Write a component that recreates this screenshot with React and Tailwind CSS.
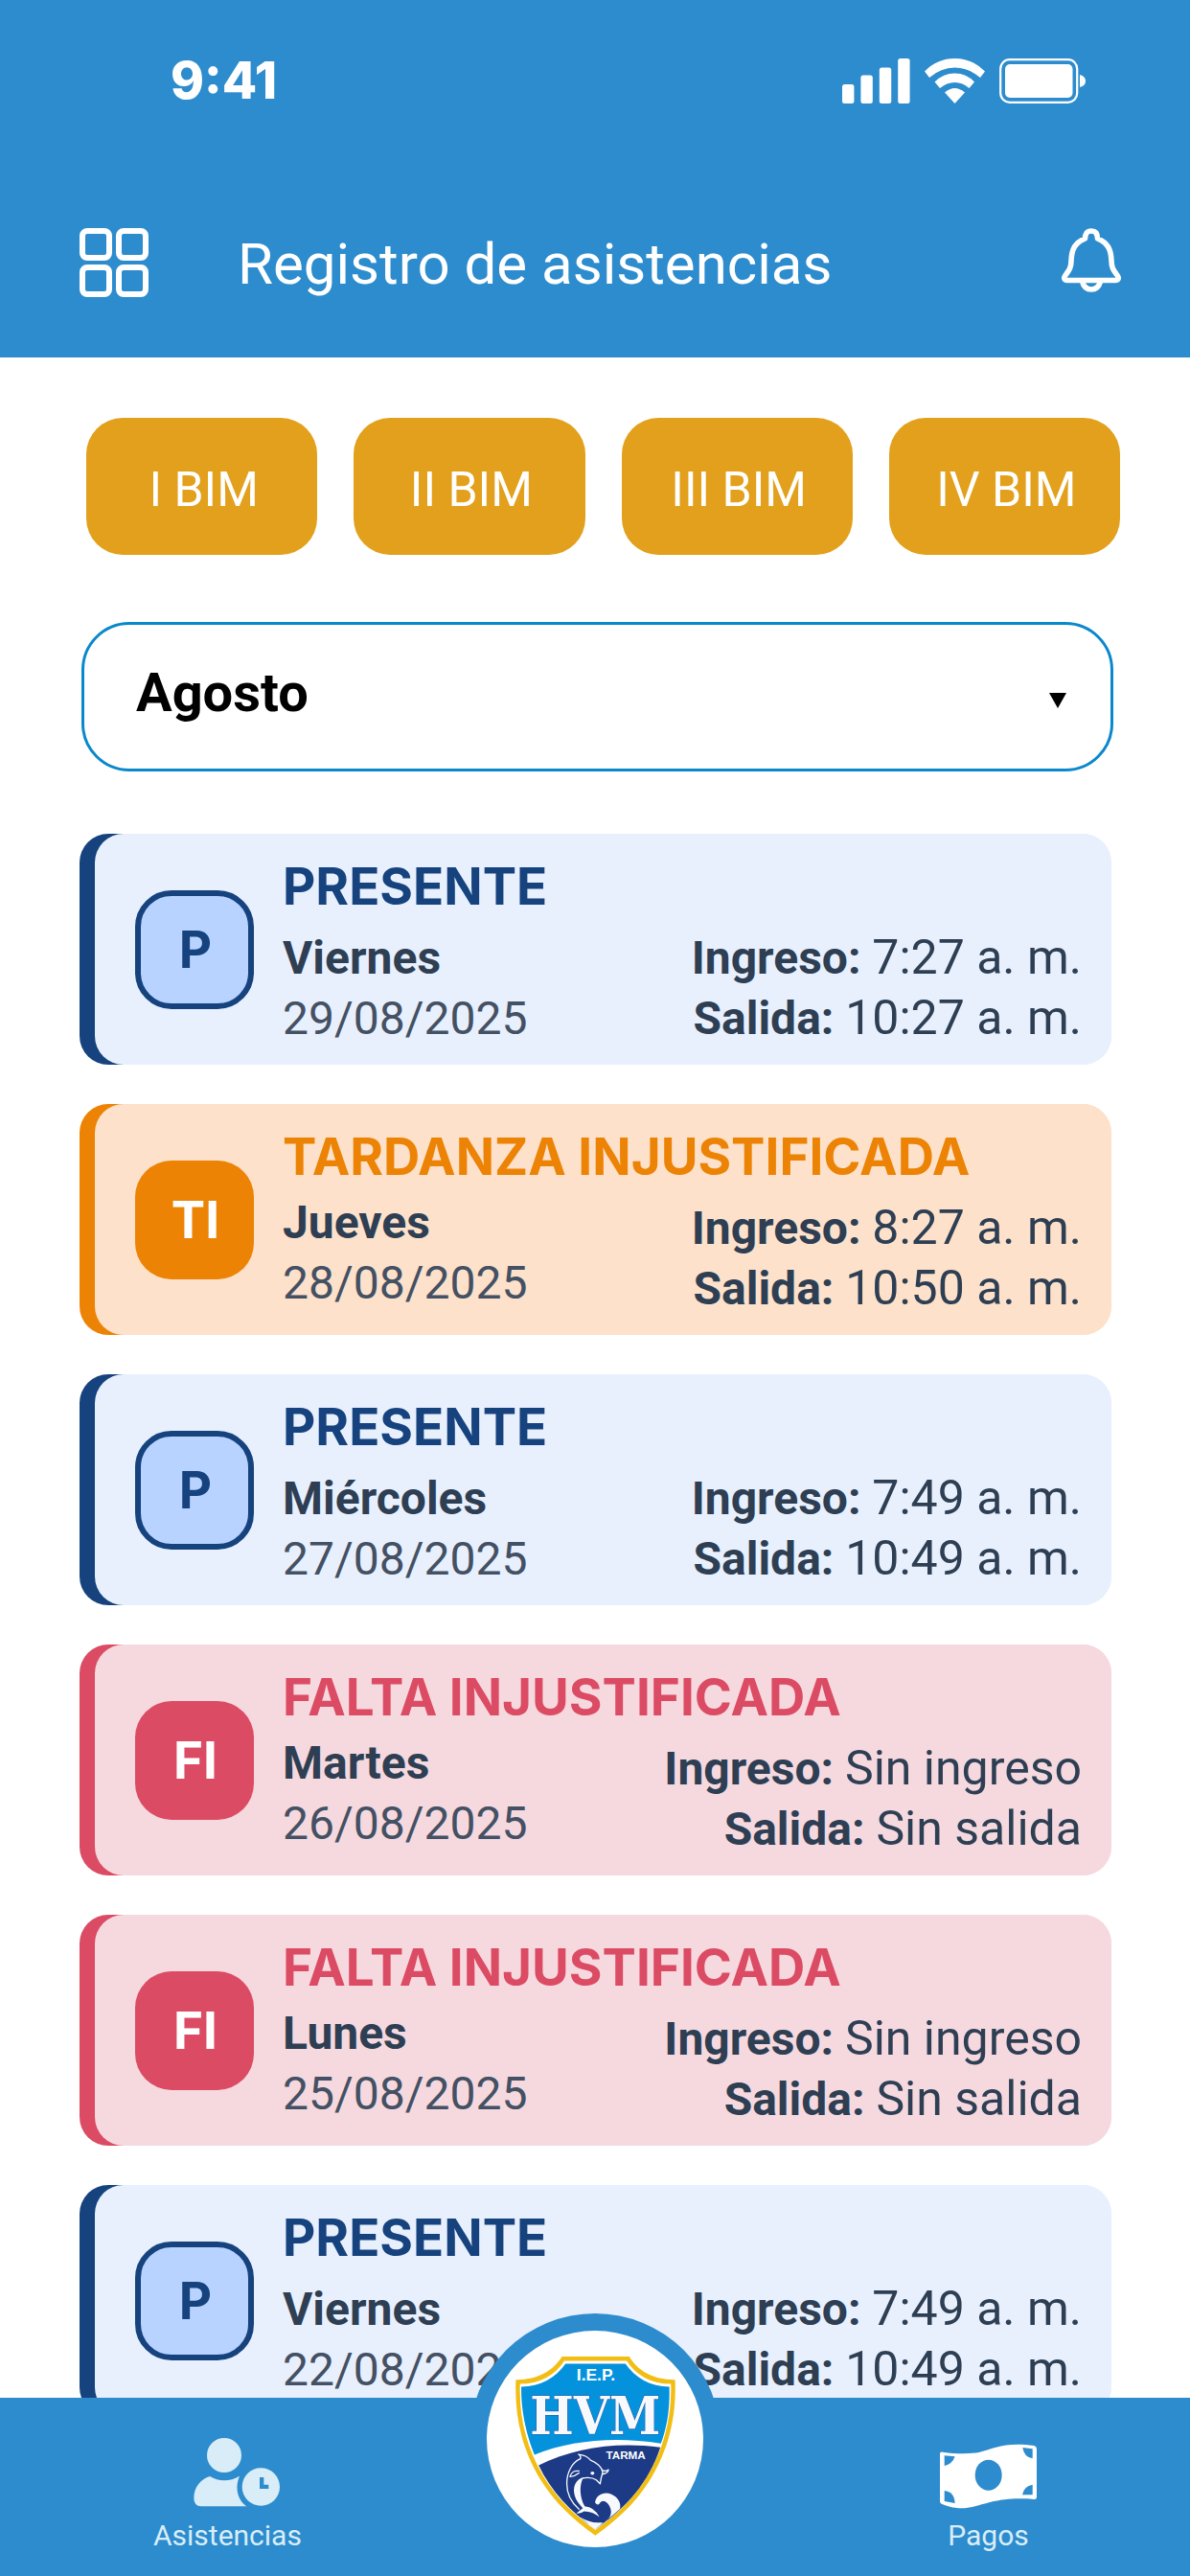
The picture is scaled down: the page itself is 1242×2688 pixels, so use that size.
import React, { useState } from 'react';

const periods = ['I BIM', 'II BIM', 'III BIM', 'IV BIM'];

const months = ['Marzo', 'Abril', 'Mayo', 'Junio', 'Julio', 'Agosto', 'Septiembre', 'Octubre', 'Noviembre', 'Diciembre'];

const statusStyles = {
  P: {
    label: 'PRESENTE',
    edge: 'from-[#16437e] to-[#e8f0fe]',
    card: 'bg-[#e8f0fe]',
    title: 'text-[#16437e]',
    badge: 'bg-[#b8d3ff] border-[6px] border-[#16437e] text-[#16437e]',
    rows: 'mt-[13px]',
    day: '',
  },
  TI: {
    label: 'TARDANZA INJUSTIFICADA',
    edge: 'from-[#ec8305] to-[#fde1ca]',
    card: 'bg-[#fde1ca]',
    title: 'text-[#ec8305]',
    badge: 'bg-[#ec8305] text-white',
    rows: 'mt-[7px]',
    day: 'pb-[6px]',
  },
  FI: {
    label: 'FALTA INJUSTIFICADA',
    edge: 'from-[#dc4b64] to-[#f6d9df]',
    card: 'bg-[#f6d9df]',
    title: 'text-[#dc4b64]',
    badge: 'bg-[#dc4b64] text-white',
    rows: 'mt-[7px]',
    day: 'pb-[6px]',
  },
};

const records = [
  { status: 'P', day: 'Viernes', date: '29/08/2025', checkIn: '7:27 a. m.', checkOut: '10:27 a. m.' },
  { status: 'TI', day: 'Jueves', date: '28/08/2025', checkIn: '8:27 a. m.', checkOut: '10:50 a. m.' },
  { status: 'P', day: 'Miércoles', date: '27/08/2025', checkIn: '7:49 a. m.', checkOut: '10:49 a. m.' },
  { status: 'FI', day: 'Martes', date: '26/08/2025', checkIn: 'Sin ingreso', checkOut: 'Sin salida' },
  { status: 'FI', day: 'Lunes', date: '25/08/2025', checkIn: 'Sin ingreso', checkOut: 'Sin salida' },
  { status: 'P', day: 'Viernes', date: '22/08/2025', checkIn: '7:49 a. m.', checkOut: '10:49 a. m.' },
];

const SignalIcon = () => (
  <svg width="71" height="47" viewBox="0 0 71 47" fill="white" aria-hidden="true">
    <rect x="0" y="27" width="12.4" height="20" rx="2.5" />
    <rect x="19.4" y="17.5" width="12.4" height="29.5" rx="2.5" />
    <rect x="38.8" y="9.5" width="12.4" height="37.5" rx="2.5" />
    <rect x="58.2" y="0" width="12.4" height="47" rx="2.5" />
  </svg>
);

const WifiIcon = () => (
  <svg width="63" height="47" viewBox="0 0 63 47" fill="white" aria-hidden="true">
    <path d="M0 13.5 Q13 0 31.5 0 Q50 0 63 13.5 L58 20 Q46 9.5 31.5 9.5 Q17 9.5 5 20Z" />
    <path d="M10.5 24.5 Q19.5 15.5 31.5 15.5 Q43.5 15.5 52 24.5 L46.5 31 Q40 25 31.5 25 Q23 25 16 31Z" />
    <path d="M21 35.5 Q31.5 26.5 42 35.5 L31.5 47Z" />
  </svg>
);

const BatteryIcon = () => (
  <svg width="90" height="47" viewBox="0 0 90 47" fill="none" aria-hidden="true">
    <rect x="1.2" y="1.2" width="80" height="44.6" rx="9.5" stroke="white" strokeWidth="2.2" />
    <rect x="6" y="6" width="70.5" height="35" rx="5" fill="white" />
    <path d="M84 17 Q90 18.5 90 23.5 Q90 28.5 84 30Z" fill="white" />
  </svg>
);

const GridIcon = () => (
  <svg width="72" height="72" viewBox="0 0 72 72" fill="none" stroke="white" strokeWidth="6" aria-hidden="true">
    <rect x="3" y="3" width="28" height="28" rx="5" />
    <rect x="41" y="3" width="28" height="28" rx="5" />
    <rect x="3" y="41" width="28" height="28" rx="5" />
    <rect x="41" y="41" width="28" height="28" rx="5" />
  </svg>
);

const BellIcon = () => (
  <svg width="62" height="67" viewBox="0 0 62 67" fill="none" stroke="white" strokeWidth="5.6" strokeLinejoin="round" aria-hidden="true">
    <path d="M24.5 11 Q24.5 3 31 3 Q37.5 3 37.5 11 C48 15 51.5 22 52 34 C52 41 54 44 57.5 48.5 C60.5 52 59.5 54.5 56 54.5 H6 C2.5 54.5 1.5 52 4.5 48.5 C8 44 10 41 10 34 C10.5 22 14 15 24.5 11Z" />
    <path d="M21.5 55.5 C23 61.5 26.5 64 31 64 C35.5 64 39 61.5 40.5 55.5" />
  </svg>
);

const UserClockIcon = () => (
  <svg width="110" height="74" viewBox="156 192 330 222" fill="#d9edf8" aria-hidden="true">
    <circle cx="312" cy="246" r="54" />
    <path d="M217 380 C217 345 240 320 267 312 C295 329 330 329 360 311 C345 345 352 385 382 406 H240 Q217 405 217 380Z" />
    <circle cx="427" cy="345" r="59" />
    <path d="M423 315 h13 v23 h15 v13 h-28z" fill="#2d8ccd" />
  </svg>
);

const MoneyIcon = () => (
  <svg width="101" height="74" viewBox="153 192 303 222" fill="white" aria-hidden="true">
    <path d="M153 240 Q154 234 162 236 C200 242 240 243 275 237 C320 225 360 203 448 216 Q456 218 456 226 V378 Q455 385 447 384 C330 374 290 405 235 411 C200 414 175 405 158 398 Q153 396 153 390Z" />
    <g fill="#2d8ccd">
      <ellipse cx="305" cy="308" rx="42" ry="48" />
      <path d="M167 247 L200 250 Q192 274 167 279Z" />
      <path d="M167 357 Q198 360 200 396 L167 390Z" />
      <path d="M412 222 L443 226 V256 Q416 252 412 222Z" />
      <path d="M443 338 V370 H411 Q416 342 443 338Z" />
    </g>
  </svg>
);

const SchoolCrest = () => (
  <svg className="size-[226px]" viewBox="84 128 676 676" role="img" aria-label="I.E.P. HVM Tarma">
    <path d="M319 209 H529 C556 254 604 282 672 281 C677 400 650 500 596 590 C550 665 492 718 423 767 C354 718 296 665 250 590 C196 500 170 400 175 281 C244 282 290 254 319 209Z" fill="#f2be13" />
    <path d="M326 222 H521 C551 268 597 294 659 294 C662 400 637 495 585 583 C542 654 488 705 423 750 C358 705 304 654 261 583 C209 495 184 400 188 294 C249 294 297 268 326 222Z" fill="white" />
    <path d="M330 231 H517 C548 276 594 301 654 303 C656 370 648 425 628 480 C480 458 350 470 233 515 C206 450 190 370 192 303 C252 301 299 276 330 231Z" fill="#0592dd" />
    <path d="M246 548 C360 492 490 474 626 492 C590 600 520 682 423 747 C345 692 285 630 246 548Z" fill="#1c3a85" />
    <text x="425" y="285" fontFamily="Liberation Sans" fontWeight="700" fontSize="52" fill="white" textAnchor="middle">I.E.P.</text>
    <text x="423" y="450" fontFamily="DejaVu Serif Condensed, DejaVu Serif, serif" fontWeight="700" fontSize="160" fill="#f7f9fd" stroke="#2b56a4" strokeWidth="3" paintOrder="stroke" textAnchor="middle">HVM</text>
    <text x="518" y="530" fontFamily="Liberation Sans" fontWeight="700" fontSize="35" fill="white" textAnchor="middle">TARMA</text>
    <g fill="none" stroke="#f7f9fd" strokeWidth="4" strokeLinecap="round" strokeLinejoin="round">
      <path d="M376 528 C350 540 334 570 334 605 C334 640 352 668 372 685" />
      <path d="M376 528 Q380 520 370 514 C390 516 402 524 408 532 C432 542 444 555 446 570 Q440 590 438 606 L426 594 C412 584 396 586 384 588" />
      <path d="M446 564 Q458 568 464 562 Q464 572 446 576" />
      <path d="M372 566 C356 564 346 572 344 584 Q360 582 372 572" />
    </g>
    <path d="M386 586 C362 592 352 615 358 640 C363 660 374 670 384 682 L364 698 Q378 700 388 692 Q415 692 436 710 Q420 678 390 676 C374 650 372 610 386 586Z" fill="#f7f9fd" />
    <ellipse cx="414" cy="573" rx="6" ry="5" fill="#f7f9fd" />
    <path d="M422 664 C426 640 450 630 472 638 C496 648 504 668 500 684 C475 708 450 724 423 747 L398 731 C440 742 482 716 470 682 C462 660 444 652 436 668 Q430 676 422 664Z" fill="#f7f9fd" />
    <path d="M376 710 Q410 732 446 726 L423 747 Q398 730 376 710Z" fill="#f7f9fd" />
  </svg>
);

const StatusBar = () => (
  <div className="flex h-14 items-center justify-between pl-[178px] pr-[109px]">
    <span className="font-[Inter,sans-serif] text-[53px] font-extrabold leading-[56px]">9:41</span>
    <div className="flex items-center gap-[15px]">
      <SignalIcon />
      <WifiIcon />
      <BatteryIcon />
    </div>
  </div>
);

const AttendanceCard = ({ record }) => {
  const style = statusStyles[record.status];
  return (
    <li className={`rounded-[30px] bg-linear-to-r from-50% to-50% pl-4 ${style.edge}`}>
      <article className={`flex items-center gap-[30px] rounded-[30px] pl-[42px] pr-[31px] ${style.card}`}>
        <div className={`flex size-[124px] shrink-0 items-center justify-center rounded-[38px] pl-[2px] pt-[2px] font-[Inter,sans-serif] text-[53px] font-bold ${style.badge}`}>
          {record.status}
        </div>
        <div className="flex-1 pb-[17px] pt-[25px]">
          <h2 className={`font-[Inter,sans-serif] text-[53px] font-bold leading-[60px] ${style.title}`}>{style.label}</h2>
          <div className={`flex items-end justify-between text-[48px] leading-[63px] text-[#2e3f54] ${style.rows}`}>
            <div className={style.day}>
              <p className="font-bold">{record.day}</p>
              <p className="text-[#445063]">{record.date}</p>
            </div>
            <div className="text-right">
              <p><b className="font-bold">Ingreso:</b> <span className="text-[50px]">{record.checkIn}</span></p>
              <p><b className="font-bold">Salida:</b> <span className="text-[50px]">{record.checkOut}</span></p>
            </div>
          </div>
        </div>
      </article>
    </li>
  );
};

const BottomNav = () => (
  <nav className="relative flex h-[186px] shrink-0 justify-between bg-[#2d8ccd] px-[160px] pt-[42px] text-[30px] leading-[36px] text-[#d9edf8]">
    <a href="#asistencias" className="flex flex-col items-center gap-[10px]">
      <UserClockIcon />
      <span>Asistencias</span>
    </a>
    <a href="#inicio" className="absolute -top-[88px] left-1/2 flex size-[262px] -translate-x-1/2 items-center justify-center rounded-full bg-[#2d8ccd]">
      <span className="rounded-full bg-white">
        <SchoolCrest />
      </span>
    </a>
    <a href="#pagos" className="flex flex-col items-center gap-[10px]">
      <MoneyIcon />
      <span>Pagos</span>
    </a>
  </nav>
);

const App = () => {
  const [month, setMonth] = useState('Agosto');

  return (
    <div className="flex h-screen flex-col overflow-hidden bg-white font-[Roboto,sans-serif]">
      <header className="shrink-0 bg-[#2d8ccd] pb-[59px] pt-14 text-white">
        <StatusBar />
        <div className="mt-[126px] flex h-[76px] items-center pl-[83px] pr-[72px]">
          <button type="button" aria-label="Menú" className="self-start">
            <GridIcon />
          </button>
          <h1 className="ml-[93px] flex-1 text-[60px] leading-[72px]">Registro de asistencias</h1>
          <button type="button" aria-label="Notificaciones" className="self-start">
            <BellIcon />
          </button>
        </div>
      </header>

      <main className="min-h-0 flex-1 overflow-hidden pt-[63px]">
        <div className="grid grid-cols-4 gap-[38px] pl-[90px] pr-[73px]">
          {periods.map((p) => (
            <button key={p} type="button" className="h-[143px] rounded-[38px] bg-[#e2a01c] pl-1 pt-2 text-[50px] text-white">
              {p}
            </button>
          ))}
        </div>

        <div className="relative ml-[85px] mr-[80px] mt-[70px]">
          <select
            aria-label="Mes"
            value={month}
            onChange={(e) => setMonth(e.target.value)}
            className="block h-[156px] w-full appearance-none rounded-[50px] border-[3px] border-[#0a88cc] bg-white pb-2 pl-[54px] text-[56px] font-bold text-black"
          >
            {months.map((m) => (
              <option key={m}>{m}</option>
            ))}
          </select>
          <svg width="18" height="16" viewBox="0 0 18 16" className="pointer-events-none absolute right-[49px] top-[74px]" aria-hidden="true">
            <path d="M0 0 H18 L9 16Z" />
          </svg>
        </div>

        <ul className="ml-[83px] mr-[82px] mt-[65px] flex flex-col gap-[41px]">
          {records.map((r) => (
            <AttendanceCard key={r.date} record={r} />
          ))}
        </ul>
      </main>

      <BottomNav />
    </div>
  );
};

export default App;
